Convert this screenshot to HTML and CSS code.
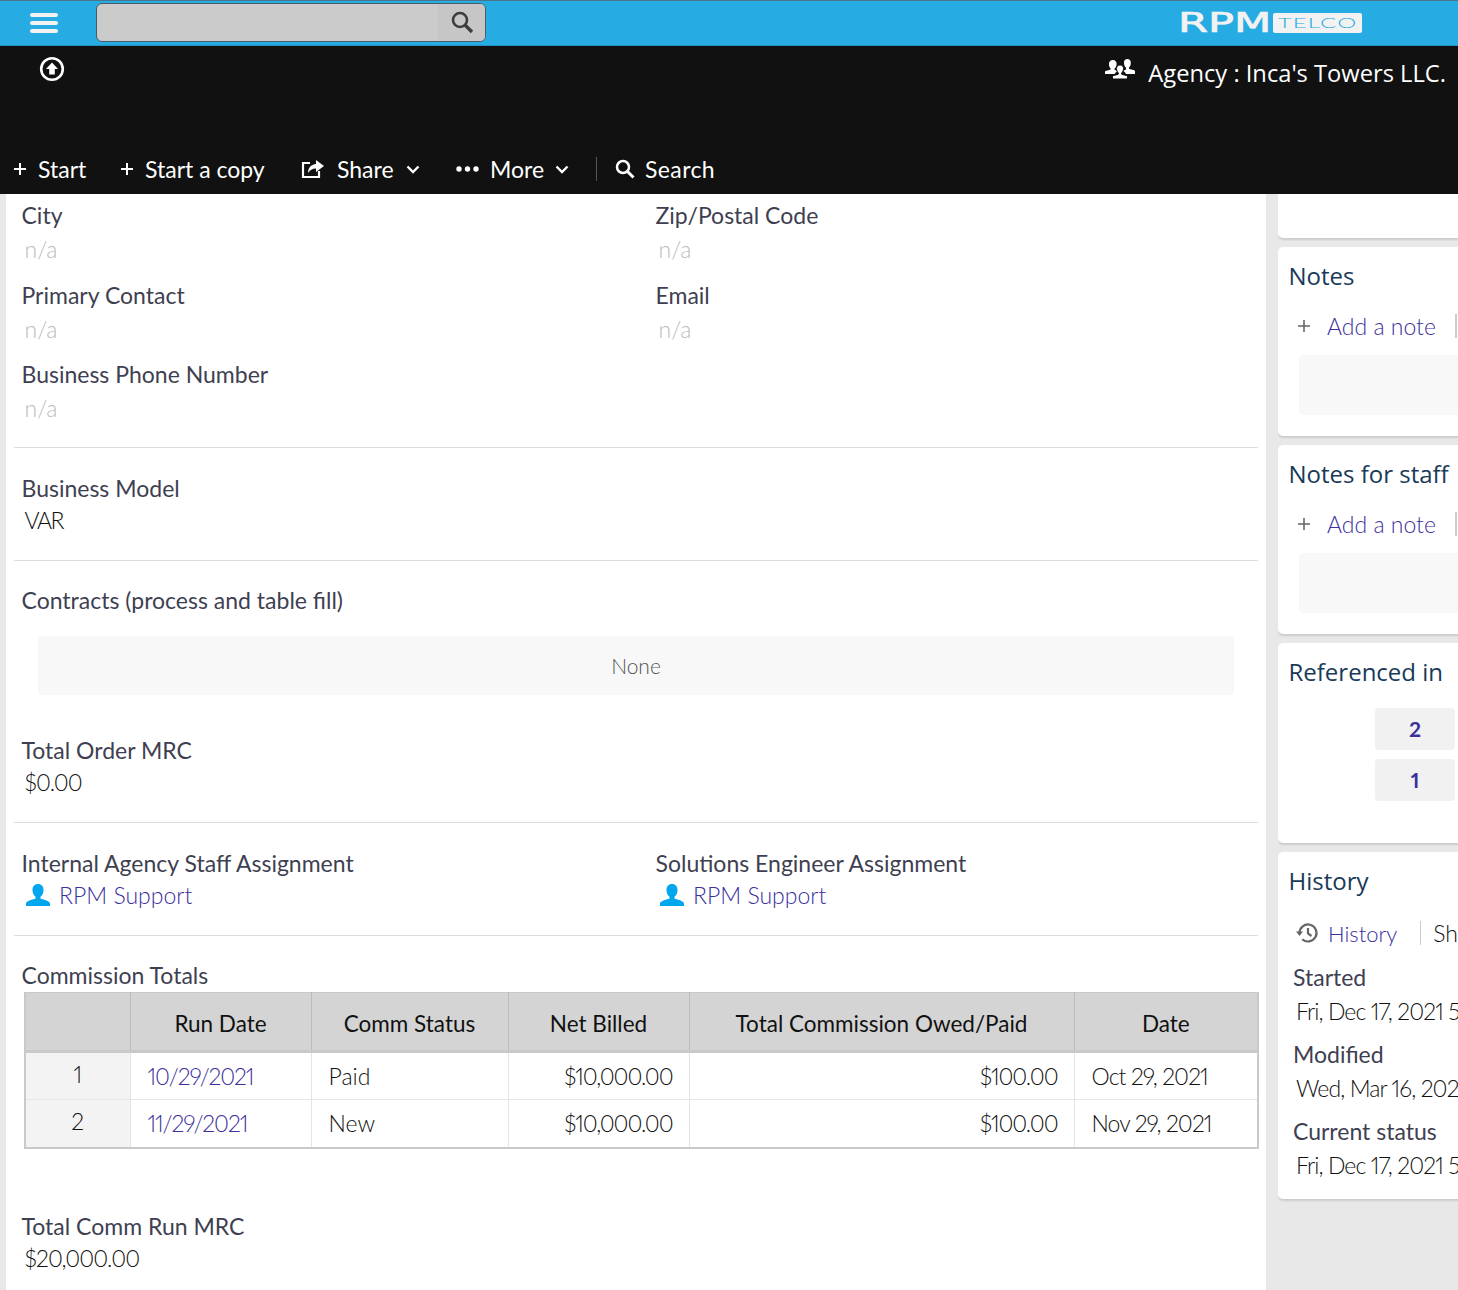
FILE: index.html
```html
<!DOCTYPE html>
<html lang="en">
<head>
<meta charset="utf-8">
<title>Agency : Inca's Towers LLC.</title>
<link rel="stylesheet" href="styles.css">
</head>
<body>
<header class="topbar">
  <button class="burger" aria-label="Menu"><span></span><span></span><span></span></button>
  <div class="searchbox">
    <div class="searchinput"></div>
    <div class="searchbtn">
      <svg width="24" height="24" viewBox="0 0 24 24" fill="none" stroke="#3d3d3d" stroke-width="2.6"><circle cx="10" cy="10" r="7"/><path d="M15 15l7 7" stroke-width="3.4"/></svg>
    </div>
  </div>
  <div class="logo"><span class="logo-rpm">RPM</span><span class="logo-telco"><span class="logo-telco-text">TELCO</span></span></div>
</header>
<section class="blackbar">
  <div class="blackrow">
    <svg class="upicon" width="26" height="26" viewBox="0 0 26 26"><circle cx="13" cy="13" r="10.8" fill="none" stroke="#fff" stroke-width="2.6"/><path d="M13 6.5l6 6.5h-3.200v5.500h-5.600V13H7z" fill="#fff"/></svg>
    <div class="agency">
      <svg class="agency-icon" width="32" height="24" viewBox="0 0 32 24" fill="#fff"><path d="M9 3a3.600 3.600 0 0 1 3.600 4c0 2-1 3.600-2 4.400v1.300c1.200.5 2 .9 3 1.500-1.500.7-2.500 1.500-3 2.800H1v-2.300c0-.9 4.500-1.500 5.500-2.200v-1.200C5.500 10.600 5 9 5 7a3.800 3.800 0 0 1 4-4z"/><path d="M23 2a3.600 3.600 0 0 1 3.800 4c0 2-.8 3.700-1.800 4.500v1.300c1 .6 6 1.300 6 2.300V17h-9c-.5-1.300-1.500-2.200-3-2.900 1-.6 1.800-1 3-1.500v-1.800c-1-.9-2-2.500-2-4.800A3.700 3.700 0 0 1 23 2z"/><path d="M16 8a3.400 3.400 0 0 1 3.500 3.700c0 1.800-.8 3.300-1.800 4v1.500c1 .6 5.800 1.100 5.800 2.300V22H8.500v-2.500c0-1.200 4.800-1.700 5.800-2.300v-1.500c-1-.7-1.800-2.200-1.800-4A3.400 3.400 0 0 1 16 8z" stroke="#111" stroke-width="1"/></svg>
      <span>Agency : Inca's Towers LLC.</span>
    </div>
  </div>
  <nav class="toolbar">
    <a class="tool t-start"><svg class="plus" width="14" height="14" viewBox="0 0 14 14"><path d="M7 1v12M1 7h12" stroke="#fff" stroke-width="2"/></svg>Start</a>
    <a class="tool t-copy"><svg class="plus" width="14" height="14" viewBox="0 0 14 14"><path d="M7 1v12M1 7h12" stroke="#fff" stroke-width="2"/></svg>Start a copy</a>
    <a class="tool t-share"><svg width="24" height="20" viewBox="0 0 24 20" fill="none"><path d="M9 4H2v14h16v-6" stroke="#fff" stroke-width="2.200"/><path d="M15 1l8 6-8 6V9.500c-4 0-6 1.500-8 4.500 0-5 3-8.500 8-9z" fill="#fff"/></svg>Share<svg class="chev" width="14" height="9" viewBox="0 0 14 9" fill="none"><path d="M1.500 1.500L7 7l5.500-5.500" stroke="#fff" stroke-width="2.400"/></svg></a>
    <a class="tool t-more"><svg width="23" height="6" viewBox="0 0 23 6" fill="#fff"><circle cx="3" cy="3" r="2.700"/><circle cx="11.500" cy="3" r="2.700"/><circle cx="20" cy="3" r="2.700"/></svg>More<svg class="chev" width="14" height="9" viewBox="0 0 14 9" fill="none"><path d="M1.500 1.500L7 7l5.500-5.500" stroke="#fff" stroke-width="2.400"/></svg></a>
    <span class="toolsep"></span>
    <a class="tool t-search"><svg width="20" height="20" viewBox="0 0 20 20" fill="none" stroke="#fff" stroke-width="2.500"><circle cx="8" cy="8" r="6"/><path d="M12.500 12.500l6 6" stroke-width="3"/></svg>Search</a>
  </nav>
</section>
<div class="content">
  <main class="panel">
    <section class="sec sec-contact">
      <div class="two">
        <div class="field"><div class="lbl">City</div><div class="val na">n/a</div></div>
        <div class="field"><div class="lbl">Zip/Postal Code</div><div class="val na">n/a</div></div>
        <div class="field"><div class="lbl">Primary Contact</div><div class="val na">n/a</div></div>
        <div class="field"><div class="lbl">Email</div><div class="val na">n/a</div></div>
        <div class="field"><div class="lbl">Business Phone Number</div><div class="val na">n/a</div></div>
      </div>
    </section>
    <section class="sec sec-plain">
      <div class="field"><div class="lbl">Business Model</div><div class="val tight-caps">VAR</div></div>
    </section>
    <section class="sec sec-contracts">
      <div class="lbl">Contracts (process and table fill)</div>
      <div class="nonebox">None</div>
      <div class="field"><div class="lbl">Total Order MRC</div><div class="val tight">$0.00</div></div>
    </section>
    <section class="sec sec-plain">
      <div class="two">
        <div class="field"><div class="lbl">Internal Agency Staff Assignment</div><div class="val link user"><svg width="26" height="24" viewBox="0 0 26 24" fill="#00a6ee"><path d="M13 1c3.500 0 5.500 2.500 5.500 6 0 3-1.200 5.500-3 6.800v1.700c2 1 9.500 2.300 9.500 5V23H1v-2.500c0-2.700 7.500-4 9.500-5v-1.700c-1.800-1.300-3-3.800-3-6.800 0-3.500 2-6 5.500-6z"/></svg>RPM Support</div></div>
        <div class="field"><div class="lbl">Solutions Engineer Assignment</div><div class="val link user"><svg width="26" height="24" viewBox="0 0 26 24" fill="#00a6ee"><path d="M13 1c3.500 0 5.500 2.500 5.500 6 0 3-1.200 5.500-3 6.800v1.700c2 1 9.500 2.300 9.500 5V23H1v-2.500c0-2.700 7.500-4 9.500-5v-1.700c-1.800-1.300-3-3.800-3-6.800 0-3.500 2-6 5.500-6z"/></svg>RPM Support</div></div>
      </div>
    </section>
    <section class="sec sec-table">
      <div class="lbl">Commission Totals</div>
      <table class="grid">
        <colgroup><col class="c0"><col class="c1"><col class="c2"><col class="c3"><col class="c4"><col class="c5"></colgroup>
        <thead><tr><th></th><th>Run Date</th><th>Comm Status</th><th>Net Billed</th><th>Total Commission Owed/Paid</th><th>Date</th></tr></thead>
        <tbody>
          <tr><td class="idx">1</td><td class="lnk">10/29/2021</td><td>Paid</td><td class="num">$10,000.00</td><td class="num">$100.00</td><td class="dat">Oct 29, 2021</td></tr>
          <tr><td class="idx">2</td><td class="lnk">11/29/2021</td><td>New</td><td class="num">$10,000.00</td><td class="num">$100.00</td><td class="dat">Nov 29, 2021</td></tr>
        </tbody>
      </table>
      <div class="field total"><div class="lbl">Total Comm Run MRC</div><div class="val tight">$20,000.00</div></div>
    </section>
  </main>
  <aside class="side">
    <div class="card card-top"></div>
    <div class="card card-notes">
      <h2>Notes</h2>
      <div class="addrow"><svg width="14" height="14" viewBox="0 0 14 14"><path d="M7 1v12M1 7h12" stroke="#666" stroke-width="1.600"/></svg><a>Add a note</a><span class="vsep"></span></div>
      <div class="greybox"></div>
    </div>
    <div class="card card-notes">
      <h2>Notes for staff</h2>
      <div class="addrow"><svg width="14" height="14" viewBox="0 0 14 14"><path d="M7 1v12M1 7h12" stroke="#666" stroke-width="1.600"/></svg><a>Add a note</a><span class="vsep"></span></div>
      <div class="greybox"></div>
    </div>
    <div class="card card-ref">
      <h2>Referenced in</h2>
      <div class="refbtn">2</div>
      <div class="refbtn">1</div>
    </div>
    <div class="card card-hist">
      <h2>History</h2>
      <div class="histrow">
        <svg width="24" height="22" viewBox="0 0 24 22" fill="none" stroke="#666" stroke-width="2.200"><path d="M4.500 11a8.500 8.500 0 1 1 2.700 6.200"/><path d="M13 6v5.500l3.500 2.500"/><path d="M1 9.500h7L4.500 14z" fill="#666" stroke="none"/></svg>
        <a>History</a><span class="hsep"></span><span class="sh">Sh</span>
      </div>
      <div class="hlbl">Started</div><div class="hval">Fri, Dec 17, 2021 5</div>
      <div class="hlbl">Modified</div><div class="hval">Wed, Mar 16, 2022</div>
      <div class="hlbl">Current status</div><div class="hval">Fri, Dec 17, 2021 5</div>
    </div>
  </aside>
</div>
</body>
</html>
```
FILE: styles.css
```css
* { box-sizing: border-box; }
html, body { margin: 0; height: 1290px; overflow: hidden; }
body { background: #e8e8e8; font-family: Lato, "Liberation Sans", sans-serif; font-size: 23px; font-feature-settings: "pnum"; color: #222; }

.topbar { height: 46px; background: #26abe3; border-top: 1px solid #4b7389; border-bottom: 1px solid #2390bf; display: flex; align-items: center; }
.burger { width: 28px; height: 20px; margin: 0 0 0 30px; padding: 0; border: 0; background: none; display: flex; flex-direction: column; justify-content: space-between; }
.burger span { display: block; height: 4px; background: #f2f2f2; border-radius: 2px; }
.searchbox { width: 390px; height: 39px; margin: 0 0 2px 38px; background: #cbcbcb; border: 1px solid #4a5a66; border-radius: 6px; display: flex; overflow: hidden; }
.searchinput { flex: 1; }
.searchbtn { width: 47px; background: #c6c6c6; display: flex; align-items: center; justify-content: center; }
.logo { margin-left: auto; margin-right: 96px; display: flex; align-items: center; gap: 3px; }
.logo-rpm { font-family: "DejaVu Sans", sans-serif; font-size: 27px; line-height: 20px; color: #f2f2f2; -webkit-text-stroke: .7px #f2f2f2; display: inline-block; width: 89px; transform: translateX(-3px) scaleX(1.6); transform-origin: left center; }
.logo-telco { width: 89px; height: 20px; background: #f2f2f2; border-radius: 2px; display: flex; justify-content: center; align-items: center; }
.logo-telco-text { color: #26abe3; font-family: Lato, sans-serif; font-weight: 300; font-size: 13px; line-height: 20px; letter-spacing: .6px; transform: scaleX(1.85); }

.blackbar { height: 148px; background: #111; color: #fff; display: flex; flex-direction: column; justify-content: space-between; }
.blackrow { display: flex; justify-content: space-between; padding: 10px 12px 0 39px; }
.agency { display: flex; align-items: flex-start; gap: 12px; font-family: "Open Sans", sans-serif; font-size: 23.7px; line-height: 34px; }
.agency-icon { margin-top: 1px; }
.toolbar { display: flex; align-items: center; height: 48px; padding: 0 0 2px 13px; }
.tool { display: flex; align-items: center; gap: 11px; color: #fff; line-height: 46px; white-space: nowrap; }
.plus { flex: none; }
.t-start { width: 107px; }
.t-copy { width: 181px; }
.t-share { width: 155px; gap: 12px; }
.t-more { width: 140px; }
.toolsep { width: 1px; height: 24px; background: #555; margin-right: 18px; }
.t-search { gap: 10px; letter-spacing: .4px; }

.content { display: flex; align-items: flex-start; }
.panel { width: 1260px; height: 1096px; margin-left: 6px; padding: 0 8px; background: #fff; overflow: hidden; }
.sec { border-bottom: 1px solid #ddd; }
.sec-contact { padding: 4px 0 22px; }
.sec-plain { padding: 23px 0 21px; }
.sec-contracts { padding: 22px 0 21px; }
.sec-table { border-bottom: 0; padding-top: 22px; }
.two { display: grid; grid-template-columns: 634px 1fr; row-gap: 11.500px; }
.field { min-width: 0; }
.lbl { padding-left: 7.500px; line-height: 34px; color: #3f3f52; }
.val { padding: 0 0 4px 10.500px; line-height: 30px; color: #111; font-weight: 300; }
.val.na { padding-bottom: 0; line-height: 34px; color: #bbb; }
.tight { letter-spacing: -.9px; }
.tight-caps { letter-spacing: -1.500px; }
.link { color: #3b309c; }
.user { display: flex; align-items: center; gap: 8px; padding-left: 11px; }
.nonebox { margin: 19px 24px 38px; height: 59px; background: #f8f8f8; border-radius: 4px; color: #555; text-align: center; line-height: 59px; font-size: 21px; font-weight: 300; }

.grid { width: 1233px; margin-left: 10px; border-collapse: collapse; table-layout: fixed; border: 2px solid #c9c9c9; border-top-width: 1px; }
.c0 { width: 105px; } .c1 { width: 181px; } .c2 { width: 197px; } .c3 { width: 181px; } .c4 { width: 385px; } .c5 { width: 184px; }
.grid th { height: 59px; background: #d4d4d4; border-left: 1px solid #bbb; border-bottom: 3px solid #c9c9c9; font-weight: 400; font-size: 22.500px; color: #111; padding-top: 4px; }
.grid th:first-child { border-left: 0; }
.grid td { height: 48px; padding: 0 16px 0 17px; border-left: 1px solid #e4e4e4; border-bottom: 1px solid #e4e4e4; color: #111; font-weight: 300; }
.grid tr:last-child td { border-bottom: 0; }
.grid .idx { background: #f3f3f3; border-left: 0; text-align: center; padding: 0 0 4px; }
.grid .lnk { color: #3b309c; letter-spacing: -1.100px; }
.grid .num { text-align: right; letter-spacing: -1.100px; }
.grid .dat { letter-spacing: -.9px; }
.total { margin-top: 60px; }

.side { width: 180px; margin-left: 12px; overflow: hidden; flex: none; height: 1096px; }
.card { width: 320px; background: #fff; border-radius: 5px; box-shadow: 0 2px 2px rgba(0,0,0,.12); margin-bottom: 9px; padding-left: 10.500px; white-space: nowrap; }
.card-top { height: 44px; border-radius: 0 0 0 5px; }
.card h2 { margin: 0; font-family: "Open Sans", sans-serif; font-weight: 400; font-size: 24px; line-height: 34px; color: #183a58; padding-top: 12px; }
.card-notes { height: 189px; }
.addrow { display: flex; align-items: center; height: 46px; margin-top: 10px; padding-left: 8.500px; font-weight: 300; }
.addrow a { margin-left: 16px; color: #3b309c; }
.vsep { width: 2px; height: 24px; background: #ccc; margin-left: 19px; }
.greybox { height: 60px; margin: 6px 0 0 10.500px; background: #f8f8f8; border-radius: 4px; }
.card-ref { height: 200px; }
.refbtn { width: 80px; height: 42px; margin: 19px 0 9px 86.500px; background: #f1f1f1; border-radius: 4px; color: #3b309c; text-align: center; line-height: 42px; font-weight: 700; font-size: 21px; }
.refbtn + .refbtn { margin-top: 0; }
.card-hist { height: 347px; }
.histrow { display: flex; align-items: center; height: 38px; margin: 16px 0 8px; padding-left: 6.500px; }
.histrow a { margin-left: 9px; color: #3b309c; font-size: 22px; font-weight: 300; }
.hsep { width: 1px; height: 24px; background: #ccc; margin: 0 12px 0 23px; }
.sh { color: #111; font-weight: 300; }
.hlbl { padding-left: 4.500px; line-height: 34px; color: #3f3f52; }
.hval { padding: 1px 0 0 7.500px; line-height: 33px; color: #111; margin-bottom: 9px; font-weight: 300; letter-spacing: -.9px; }
```
